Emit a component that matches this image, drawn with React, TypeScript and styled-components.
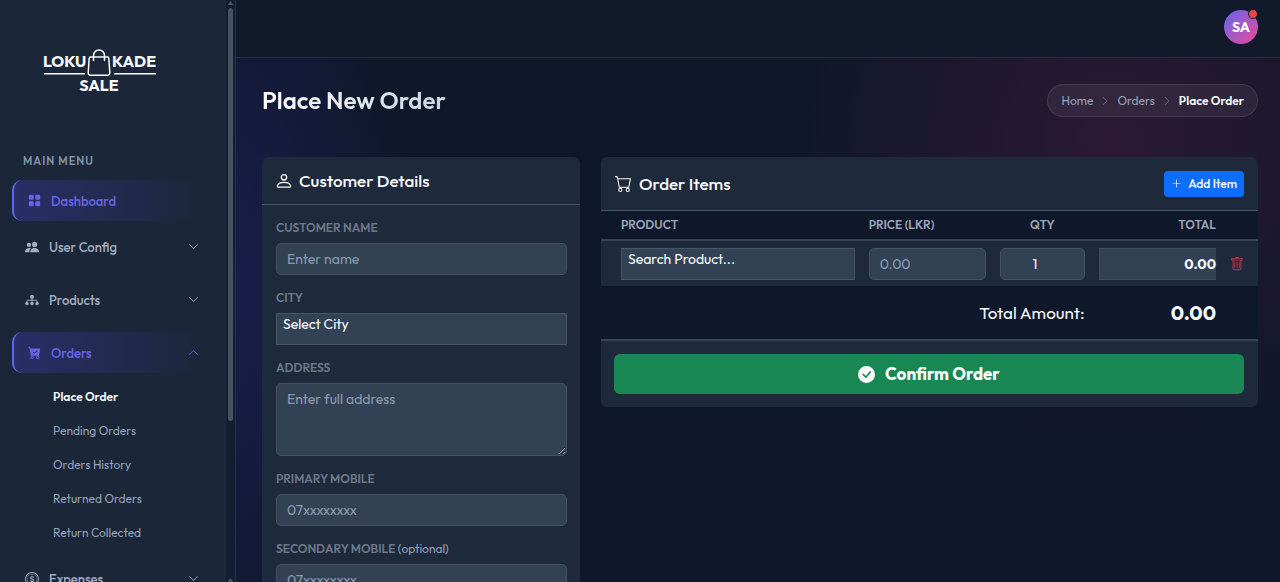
import React from 'react';
import styled, { createGlobalStyle } from 'styled-components';
import {
  BsGridFill,
  BsPeopleFill,
  BsCartCheckFill,
  BsCoin,
  BsChevronDown,
  BsChevronUp,
  BsChevronRight,
  BsCart,
  BsPlusLg,
  BsTrash,
  BsCheckCircleFill,
} from 'react-icons/bs';

const GlobalStyle = createGlobalStyle`
  *, *::before, *::after { box-sizing: border-box; }
  html, body, #root { height: 100%; }
  body {
    margin: 0;
    overflow: hidden;
    background: #0f172a;
    color: #f8fafc;
    font-family: Outfit, Lato, sans-serif;
    font-size: 14px;
    line-height: 20px;
  }
  button, input, select, textarea { font: inherit; color: inherit; margin: 0; }
  a { color: inherit; text-decoration: none; }
  svg { flex: none; }
`;

const Shell = styled.div`
  display: flex;
  height: 100vh;
  overflow: hidden;
  background:
    radial-gradient(circle at 87% 24%, rgba(120, 30, 80, 0.27), transparent 330px),
    radial-gradient(ellipse 210px 420px at 210px 50%, rgba(49, 46, 150, 0.32), transparent),
    #0f172a;
`;

const Sidebar = styled.aside`
  display: flex;
  flex: none;
  width: 236px;
  height: 100%;
  background: #1b2638;
  border-right: 1px solid #28334a;
`;

const SidebarBody = styled.div`
  flex: 1;
  min-width: 0;
  overflow: hidden;
`;

const ScrollTrack = styled.div`
  display: flex;
  flex-direction: column;
  align-items: center;
  width: 9px;
  background: #131d31;
`;

const ScrollArrow = styled.span<{ $down?: boolean }>`
  width: 6px;
  height: 4px;
  margin: ${(p) => (p.$down ? 'auto 0 0' : '1px 0 3px')};
  background: #475264;
  clip-path: polygon(50% 0, 100% 100%, 0 100%);
`;

const ScrollThumb = styled.div`
  width: 5px;
  height: 71%;
  border-radius: 3px;
  background: #475264;
`;

const Brand = styled.a`
  display: flex;
  justify-content: center;
  padding: 48px 29px 59px 0;
`;

const MenuTitle = styled.h2`
  margin: 0;
  padding: 0 23px;
  font-size: 11px;
  line-height: 16px;
  font-weight: 600;
  letter-spacing: 1px;
  color: #8491a5;
`;

const Menu = styled.nav`
  display: flex;
  flex-direction: column;
  padding: 11px 19px 0 12px;
`;

const MenuLink = styled.a<{ $active?: boolean; $gap?: number }>`
  display: flex;
  align-items: center;
  gap: 10px;
  height: 41px;
  margin-bottom: ${(p) => p.$gap ?? 12}px;
  padding: 0 8px 0 ${(p) => (p.$active ? 14 : 13)}px;
  border-left: ${(p) => (p.$active ? '2px solid #6366f1' : '0')};
  border-radius: 10px;
  background: ${(p) => (p.$active ? 'linear-gradient(90deg, rgba(79, 70, 229, 0.27), rgba(79, 70, 229, 0))' : 'none')};
  color: ${(p) => (p.$active ? '#6864e4' : '#a0aec2')};
  font-size: 13px;
  font-weight: 500;

  span { flex: 1; }
`;

const SubMenu = styled.ul`
  display: flex;
  flex-direction: column;
  margin: 0 0 8px;
  padding: 0 0 0 41px;
  list-style: none;
`;

const SubLink = styled.a<{ $current?: boolean }>`
  display: block;
  padding: 7px 0;
  font-size: 12px;
  font-weight: ${(p) => (p.$current ? 600 : 400)};
  color: ${(p) => (p.$current ? '#f8fafc' : '#94a3b8')};
`;

const Main = styled.div`
  display: flex;
  flex: 1;
  flex-direction: column;
  min-width: 0;
`;

const TopBar = styled.header`
  display: flex;
  flex: none;
  align-items: center;
  justify-content: flex-end;
  height: 58px;
  padding: 0 22px 4px;
  background: #11192b;
  border-bottom: 1px solid #242d3e;
`;

const Avatar = styled.button`
  position: relative;
  width: 34px;
  height: 34px;
  padding: 0;
  border: 0;
  border-radius: 50%;
  background: linear-gradient(135deg, #6366f1, #ec4899);
  color: #fff;
  font-weight: 700;
`;

const AlertDot = styled.span`
  position: absolute;
  top: -1px;
  right: 0;
  width: 10px;
  height: 10px;
  border: 1px solid #11192b;
  border-radius: 50%;
  background: #ef4444;
`;

const PageHead = styled.div`
  display: flex;
  align-items: center;
  justify-content: space-between;
  padding: 26px 22px 40px 26px;
`;

const PageTitle = styled.h1`
  margin: 0;
  padding-bottom: 2px;
  font-size: 24px;
  line-height: 30px;
  font-weight: 600;
  background: linear-gradient(90deg, #fff, #cbd5e1);
  background-clip: text;
  color: transparent;
`;

const Crumbs = styled.nav`
  display: flex;
  align-items: center;
  gap: 7px;
  height: 33px;
  padding: 0 13px;
  border: 1px solid rgba(255, 255, 255, 0.1);
  border-radius: 17px;
  background: rgba(255, 255, 255, 0.06);
  font-size: 12px;
  color: #94a3b8;

  svg { color: #6b6a80; }
  strong { color: #f8fafc; font-weight: 600; }
`;

const Columns = styled.main`
  display: grid;
  grid-template-columns: minmax(0, 318fr) minmax(0, 657fr);
  align-items: start;
  gap: 21px;
  padding: 0 22px 0 26px;
`;

const Card = styled.section`
  border-radius: 6px;
  background: #1e293b;
  overflow: hidden;
`;

const CardHead = styled.div<{ $tall?: boolean }>`
  display: flex;
  align-items: center;
  justify-content: space-between;
  height: ${(p) => (p.$tall ? 54 : 48)}px;
  padding: 0 14px;
  border-bottom: 1px solid #475569;
`;

const CardTitle = styled.h2`
  display: flex;
  align-items: center;
  gap: 7px;
  margin: 0;
  font-size: 17px;
  line-height: 24px;
  font-weight: 500;
`;

const Form = styled.form`
  display: flex;
  flex-direction: column;
  gap: 14px;
  padding: 14px 13px 20px 14px;
`;

const Field = styled.div`
  display: flex;
  flex-direction: column;
  gap: 7px;
`;

const Label = styled.label`
  font-size: 12px;
  line-height: 17px;
  font-weight: 600;
  color: #6c7888;

  small { font-size: 12px; font-weight: 400; color: #94a3b8; }
`;

const Input = styled.input<{ $align?: string }>`
  display: block;
  width: 100%;
  height: 32px;
  padding: 0 10px;
  border: 1px solid #435066;
  border-radius: 5px;
  background: #334155;
  text-align: ${(p) => p.$align ?? 'left'};

  &::placeholder { color: #8b99ad; opacity: 1; }
`;

const TextArea = styled(Input).attrs({ as: 'textarea' })`
  height: 73px;
  padding: 5px 10px;
  resize: vertical;
`;

const Select = styled.select`
  display: block;
  width: 100%;
  height: 32px;
  padding: 0 6px 10px;
  border: 1px solid #475569;
  border-radius: 0;
  background: #334155;
  appearance: none;
`;

const AddButton = styled.button`
  display: flex;
  align-items: center;
  gap: 6px;
  height: 26px;
  padding: 0 7px;
  border: 0;
  border-radius: 4px;
  background: #0d6efd;
  color: #fff;
  font-size: 12px;
  font-weight: 500;
`;

const ItemsTable = styled.table`
  width: 100%;
  table-layout: fixed;
  border-collapse: collapse;
  background: #0f172a;

  th, td { padding: 0 7px; text-align: left; }
  th:first-child, td:first-child { padding-left: 20px; }
  thead tr { height: 29px; border-bottom: 2px solid #364256; }
  tbody tr { height: 46px; background: #1e293b; }
  tfoot tr { height: 53px; }
  th { font-size: 12px; font-weight: 600; color: #98a4b7; }
`;

const ProductColumn = styled.col``;
const PriceColumn = styled.col`
  width: 20%;
`;
const QuantityColumn = styled.col`
  width: 15%;
`;
const ActionColumn = styled.col`
  width: 35px;
`;

const Cell = styled.td<{ $align: 'center' | 'right' }>`
  && { text-align: ${(p) => p.$align}; }
`;

const HeadCell = styled.th<{ $align: 'center' | 'right' }>`
  && { text-align: ${(p) => p.$align}; }
`;

const LineTotal = styled.output`
  display: block;
  height: 32px;
  border: 1px solid #3f4c60;
  border-right: 0;
  background: #334155;
  line-height: 30px;
  font-weight: 700;
`;

const RemoveButton = styled.button`
  display: flex;
  padding: 0;
  border: 0;
  background: none;
  color: #c9364a;
`;

const TotalLabel = styled(Cell)`
  font-size: 17px;
`;

const GrandTotal = styled(Cell)`
  font-size: 20px;
  font-weight: 700;
`;

const CardFoot = styled.div`
  padding: 13px 14px 13px 13px;
  border-top: 2px solid #364256;
`;

const ConfirmButton = styled.button`
  display: flex;
  align-items: center;
  justify-content: center;
  gap: 10px;
  width: 100%;
  height: 40px;
  border: 0;
  border-radius: 6px;
  background: #198754;
  color: #fff;
  font-size: 17px;
  font-weight: 700;
`;

function Logo() {
  return (
    <svg width="114" height="46" viewBox="0 0 114 46" fill="none" stroke="#f8fafc" role="img" aria-label="Loku Kade Sale">
      <g fill="#f8fafc" stroke="none" fontFamily="Outfit, Lato, sans-serif" fontSize="16" fontWeight="700">
        <text x="1" y="19">LOKU</text>
        <text x="114" y="19" textAnchor="end">KADE</text>
        <text x="57" y="43" textAnchor="middle">SALE</text>
      </g>
      <path d="M2 25.700h41M72 25.700h42" strokeWidth="1.500" />
      <path d="M48.500 9h17q1.200 0 1.300 1.200l1 14.300q.1 2.800-2.500 2.800h-16.600q-2.600 0-2.500-2.800l1-14.300q.1-1.200 1.300-1.200zM51.500 12.500V7.500a5.500 5.500 0 0 1 11 0v5" strokeWidth="1.500" strokeLinecap="round" strokeLinejoin="round" />
    </svg>
  );
}

function PersonIcon() {
  return (
    <svg width="16" height="16" viewBox="0 0 16 16" fill="none" stroke="currentColor" strokeWidth="1.300" strokeLinejoin="round">
      <circle cx="8" cy="4.300" r="2.700" />
      <path d="M2.600 14.200c-.9 0-1.300-.5-1.200-1.300C1.800 10.700 4.400 9.300 8 9.300s6.200 1.400 6.600 3.600c.1.800-.3 1.300-1.200 1.300z" />
    </svg>
  );
}

function HierarchyIcon() {
  return (
    <svg width="14" height="14" viewBox="0 0 16 16" fill="currentColor">
      <circle cx="8" cy="4.200" r="2.300" />
      <circle cx="2.200" cy="12" r="2" />
      <circle cx="8" cy="12" r="2" />
      <circle cx="13.800" cy="12" r="2" />
      <path d="M8 5v6M2.200 11V9q0-.8.8-.8h10q.8 0 .8.800v2" fill="none" stroke="currentColor" strokeWidth="1.100" />
    </svg>
  );
}

const subPages = ['Place Order', 'Pending Orders', 'Orders History', 'Returned Orders', 'Return Collected'];

export default function App() {
  return (
    <>
      <GlobalStyle />
      <Shell>
        <Sidebar>
          <SidebarBody>
            <Brand href="#"><Logo /></Brand>
            <MenuTitle>MAIN MENU</MenuTitle>
            <Menu>
              <MenuLink href="#" $active $gap={5}><BsGridFill size={13} /><span>Dashboard</span></MenuLink>
              <MenuLink href="#"><BsPeopleFill size={14} /><span>User Config</span><BsChevronDown size={11} /></MenuLink>
              <MenuLink href="#"><HierarchyIcon /><span>Products</span><BsChevronDown size={11} /></MenuLink>
              <MenuLink href="#" $active $gap={7}><BsCartCheckFill size={13} /><span>Orders</span><BsChevronUp size={11} /></MenuLink>
              <SubMenu>
                {subPages.map((name, i) => (
                  <li key={name}><SubLink href="#" $current={i === 0}>{name}</SubLink></li>
                ))}
              </SubMenu>
              <MenuLink href="#"><BsCoin size={14} /><span>Expenses</span><BsChevronDown size={11} /></MenuLink>
            </Menu>
          </SidebarBody>
          <ScrollTrack aria-hidden="true">
            <ScrollArrow />
            <ScrollThumb />
            <ScrollArrow $down />
          </ScrollTrack>
        </Sidebar>
        <Main>
          <TopBar>
            <Avatar type="button">SA<AlertDot /></Avatar>
          </TopBar>
          <PageHead>
            <PageTitle>Place New Order</PageTitle>
            <Crumbs aria-label="Breadcrumb">
              <a href="#">Home</a>
              <BsChevronRight size={10} />
              <a href="#">Orders</a>
              <BsChevronRight size={10} />
              <strong>Place Order</strong>
            </Crumbs>
          </PageHead>
          <Columns>
            <Card>
              <CardHead><CardTitle><PersonIcon />Customer Details</CardTitle></CardHead>
              <Form>
                <Field>
                  <Label htmlFor="name">CUSTOMER NAME</Label>
                  <Input id="name" placeholder="Enter name" />
                </Field>
                <Field>
                  <Label htmlFor="city">CITY</Label>
                  <Select id="city"><option>Select City</option></Select>
                </Field>
                <Field>
                  <Label htmlFor="address">ADDRESS</Label>
                  <TextArea id="address" placeholder="Enter full address" />
                </Field>
                <Field>
                  <Label htmlFor="primary">PRIMARY MOBILE</Label>
                  <Input id="primary" type="tel" placeholder="07xxxxxxxx" />
                </Field>
                <Field>
                  <Label htmlFor="secondary">SECONDARY MOBILE <small>(optional)</small></Label>
                  <Input id="secondary" type="tel" placeholder="07xxxxxxxx" />
                </Field>
              </Form>
            </Card>
            <Card>
              <CardHead $tall>
                <CardTitle><BsCart size={17} />Order Items</CardTitle>
                <AddButton type="button"><BsPlusLg size={11} />Add Item</AddButton>
              </CardHead>
              <ItemsTable>
                <colgroup>
                  <ProductColumn />
                  <PriceColumn />
                  <QuantityColumn />
                  <PriceColumn />
                  <ActionColumn />
                </colgroup>
                <thead>
                  <tr>
                    <th>PRODUCT</th>
                    <th>PRICE (LKR)</th>
                    <HeadCell $align="center">QTY</HeadCell>
                    <HeadCell $align="right">TOTAL</HeadCell>
                    <th aria-label="Actions" />
                  </tr>
                </thead>
                <tbody>
                  <tr>
                    <td><Select aria-label="Product"><option>Search Product...</option></Select></td>
                    <td><Input type="number" aria-label="Price" placeholder="0.00" /></td>
                    <td><Input type="number" aria-label="Quantity" defaultValue="1" $align="center" /></td>
                    <Cell $align="right"><LineTotal>0.00</LineTotal></Cell>
                    <td><RemoveButton type="button" aria-label="Remove item"><BsTrash size={14} /></RemoveButton></td>
                  </tr>
                </tbody>
                <tfoot>
                  <tr>
                    <TotalLabel $align="right" colSpan={3}>Total Amount:</TotalLabel>
                    <GrandTotal $align="right">0.00</GrandTotal>
                    <td />
                  </tr>
                </tfoot>
              </ItemsTable>
              <CardFoot>
                <ConfirmButton type="button"><BsCheckCircleFill size={17} />Confirm Order</ConfirmButton>
              </CardFoot>
            </Card>
          </Columns>
        </Main>
      </Shell>
    </>
  );
}
